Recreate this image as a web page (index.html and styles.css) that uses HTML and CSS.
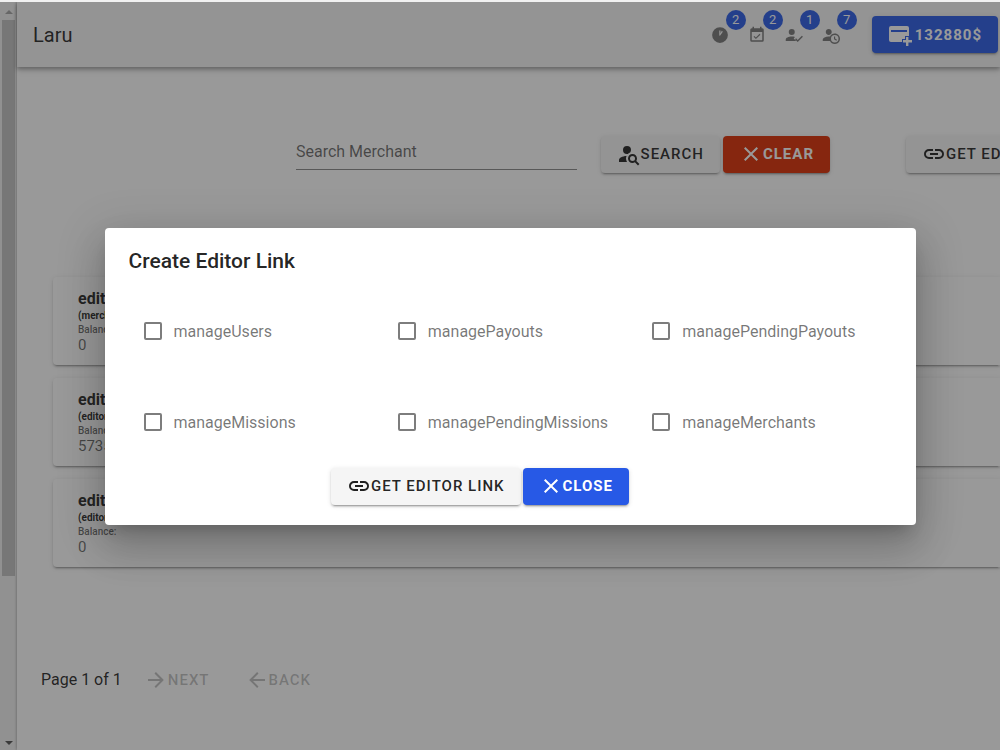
FILE: index.html
```html
<!DOCTYPE html>
<html lang="en">
<head>
    <meta charset="UTF-8">
    <meta name="viewport" content="width=device-width, initial-scale=1.0">
    <title>Laru</title>
    <link rel="stylesheet" href="styles.css">
</head>
<body>
    <!-- shared icons -->
    <svg class="icon-defs" aria-hidden="true">
        <symbol id="icon-link" viewBox="0 0 24 24"><path d="M3.9,12C3.9,10.29 5.29,8.9 7,8.9H11V7H7A5,5 0 0,0 2,12A5,5 0 0,0 7,17H11V15.1H7C5.29,15.1 3.9,13.71 3.9,12M8,13H16V11H8V13M17,7H13V8.9H17C18.71,8.9 20.1,10.29 20.1,12C20.1,13.71 18.71,15.1 17,15.1H13V17H17A5,5 0 0,0 22,12A5,5 0 0,0 17,7Z"/></symbol>
        <symbol id="icon-close" viewBox="0 0 24 24"><path d="M19,6.41L17.59,5L12,10.59L6.41,5L5,6.41L10.59,12L5,17.59L6.41,19L12,13.41L17.59,19L19,17.59L13.41,12L19,6.41Z"/></symbol>
    </svg>

    <div class="app">
        <div class="scrollbar">
            <span class="arrow arrow-up"></span>
            <div class="track"><div class="thumb"></div></div>
            <span class="arrow arrow-down"></span>
        </div>

        <div class="page">
            <header class="header">
                <div class="brand">Laru</div>
                <nav class="notices">
                    <a href="#" class="notice" aria-label="Pending missions">
                        <svg viewBox="0 0 24 24"><path fill-rule="evenodd" d="M12,1.5A10.5,10.5 0 0,1 22.5,12A10.5,10.5 0 0,1 12,22.5A10.5,10.5 0 0,1 1.5,12A10.5,10.5 0 0,1 12,1.5M11,6V12.5L12,13L15.8,7.6L14.4,6.4L12.6,9.6V6Z"/></svg>
                        <span class="badge">2</span>
                    </a>
                    <a href="#" class="notice" aria-label="Missions">
                        <svg viewBox="0 0 24 24"><path d="M19,3H18V1H16V3H8V1H6V3H5A2,2 0 0,0 3,5V19A2,2 0 0,0 5,21H19A2,2 0 0,0 21,19V5A2,2 0 0,0 19,3M19,19H5V8H19V19M10.56,17.46L16.5,11.53L15.43,10.47L10.56,15.34L8.45,13.23L7.39,14.29L10.56,17.46Z"/></svg>
                        <span class="badge">2</span>
                    </a>
                    <a href="#" class="notice" aria-label="Payouts">
                        <svg viewBox="0 0 24 24"><path d="M9,4A4,4 0 0,1 13,8A4,4 0 0,1 9,12A4,4 0 0,1 5,8A4,4 0 0,1 9,4M1,20V18C1,15.79 4.58,14 9,14C10.6,14 12.1,14.2 13.3,14.7L11.6,16.5L15,20H1M22.5,13L23.9,14.4L16.9,21.3L13.4,17.8L14.8,16.4L16.9,18.5L22.5,13Z"/></svg>
                        <span class="badge">1</span>
                    </a>
                    <a href="#" class="notice" aria-label="Pending payouts">
                        <svg viewBox="0 0 24 24"><path d="M10.63,14.1C12.23,10.58 16.38,9.03 19.9,10.63C23.42,12.23 24.97,16.38 23.37,19.9C22.24,22.4 19.75,24 17,24C14.3,24 11.83,22.44 10.67,20H1V18C1.06,16.86 1.84,15.93 3.34,15.18C4.84,14.43 6.72,14.04 9,14C9.57,14 10.11,14.05 10.63,14.1M9,4C10.12,4 11.06,4.37 11.81,5.1C12.56,5.85 12.94,6.79 12.94,7.91C12.94,9.03 12.56,9.96 11.81,10.71C11.06,11.47 10.12,11.84 9,11.84C7.88,11.84 6.94,11.47 6.19,10.71C5.44,9.96 5.06,9.03 5.06,7.91C5.06,6.79 5.44,5.85 6.19,5.1C6.94,4.37 7.88,4 9,4M17,22A5,5 0 0,0 22,17A5,5 0 0,0 17,12A5,5 0 0,0 12,17A5,5 0 0,0 17,22M16,14H17.5V16.82L19.94,18.23L19.19,19.53L16,17.69V14Z"/></svg>
                        <span class="badge">7</span>
                    </a>
                </nav>
                <button type="button" class="btn btn-primary btn-balance">
                    <svg viewBox="0 0 24 24"><path fill-rule="evenodd" d="M3,3H19A2,2 0 0,1 21,5V13H17V16H14V19H3A2,2 0 0,1 1,17V5A2,2 0 0,1 3,3M3,7V9H19V7H3M18,14H20.4V17H24V19.4H20.4V23H18V19.4H15V17H18V14Z"/></svg>
                    132880$
                </button>
            </header>

            <main class="content">
                <form class="search">
                    <input type="text" class="search-input" placeholder="Search Merchant" aria-label="Search Merchant">
                    <div class="btn-group">
                        <button type="button" class="btn">
                            <svg viewBox="0 0 24 24"><path d="M15.5,12C18,12 20,14 20,16.5C20,17.38 19.75,18.21 19.31,18.9L22.39,22L21,23.39L17.88,20.32C17.19,20.75 16.37,21 15.5,21C13,21 11,19 11,16.5C11,14 13,12 15.5,12M15.5,14A2.5,2.5 0 0,0 13,16.5A2.5,2.5 0 0,0 15.5,19A2.5,2.5 0 0,0 18,16.5A2.5,2.5 0 0,0 15.5,14M10,4A4,4 0 0,1 14,8C14,8.91 13.69,9.75 13.18,10.43C12.32,10.75 11.55,11.26 10.91,11.9L10,12A4,4 0 0,1 6,8A4,4 0 0,1 10,4M2,20V18C2,15.88 5.31,14.14 9.5,14C9.18,14.78 9,15.62 9,16.5C9,17.79 9.38,19 10,20H2Z"/></svg>
                            SEARCH
                        </button>
                        <button type="reset" class="btn btn-danger">
                            <svg><use href="#icon-close"/></svg>
                            CLEAR
                        </button>
                    </div>
                    <div class="search-extra">
                        <button type="button" class="btn">
                            <svg><use href="#icon-link"/></svg>
                            GET EDITOR LINK
                        </button>
                    </div>
                </form>

                <div class="cards">
                    <div class="card">
                        <div class="card-name">editor</div>
                        <div class="card-role">(merchant)</div>
                        <div class="card-label">Balance:</div>
                        <div class="card-value">0</div>
                    </div>
                    <div class="card">
                        <div class="card-name">editor</div>
                        <div class="card-role">(editor)</div>
                        <div class="card-label">Balance:</div>
                        <div class="card-value">5735</div>
                    </div>
                    <div class="card">
                        <div class="card-name">editor</div>
                        <div class="card-role">(editor)</div>
                        <div class="card-label">Balance:</div>
                        <div class="card-value">0</div>
                    </div>
                </div>

                <div class="pager">
                    <span>Page 1 of 1</span>
                    <div class="btn-group">
                        <button type="button" class="btn btn-text" disabled>
                            <svg viewBox="0 0 24 24"><path d="M4,11V13H16L10.5,18.5L11.92,19.92L19.84,12L11.92,4.08L10.5,5.5L16,11H4Z"/></svg>
                            NEXT
                        </button>
                        <button type="button" class="btn btn-text" disabled>
                            <svg viewBox="0 0 24 24"><path d="M20,11V13H8L13.5,18.5L12.08,19.92L4.16,12L12.08,4.08L13.5,5.5L8,11H20Z"/></svg>
                            BACK
                        </button>
                    </div>
                </div>
            </main>
        </div>

        <div class="overlay">
            <div class="dialog" role="dialog" aria-labelledby="dialog-title">
                <h2 class="dialog-title" id="dialog-title">Create Editor Link</h2>
                <div class="permissions">
                    <label class="permission"><input type="checkbox">manageUsers</label>
                    <label class="permission"><input type="checkbox">managePayouts</label>
                    <label class="permission"><input type="checkbox">managePendingPayouts</label>
                    <label class="permission"><input type="checkbox">manageMissions</label>
                    <label class="permission"><input type="checkbox">managePendingMissions</label>
                    <label class="permission"><input type="checkbox">manageMerchants</label>
                </div>
                <div class="dialog-actions">
                    <button type="button" class="btn">
                        <svg><use href="#icon-link"/></svg>
                        GET EDITOR LINK
                    </button>
                    <button type="button" class="btn btn-primary">
                        <svg><use href="#icon-close"/></svg>
                        CLOSE
                    </button>
                </div>
            </div>
        </div>
    </div>
</body>
</html>
```
FILE: styles.css
```css
* {
    box-sizing: border-box;
}
body {
    margin: 0;
    padding-top: 2px;
    height: 100vh;
    background-color: #f1f1f1;
    font-family: Roboto, sans-serif;
    font-size: 16px;
    color: rgba(0, 0, 0, 0.87);
    overflow: hidden;
}
.icon-defs {
    display: none;
}
.app {
    position: relative;
    display: flex;
    height: 100%;
    background-color: #fff;
    overflow: hidden;
}

/* scrollbar */
.scrollbar {
    display: flex;
    flex-direction: column;
    align-items: center;
    justify-content: space-between;
    width: 17px;
    padding: 8px 2px 5px;
    background-color: #f1f1f1;
}
.track {
    flex: 1;
    width: 100%;
    padding: 6px 0 8px;
}
.thumb {
    height: 78%;
    background-color: #c1c1c1;
}
.arrow {
    border-left: 4px solid transparent;
    border-right: 4px solid transparent;
}
.arrow-up {
    border-bottom: 4px solid #a3a3a3;
}
.arrow-down {
    border-top: 4px solid #505050;
}

/* header */
.page {
    flex: 1;
    min-width: 0;
    box-shadow: 0 0 3px rgba(0, 0, 0, 0.4);
}
.header {
    display: flex;
    align-items: center;
    height: 65px;
    padding: 0 2px 0 16px;
    background-color: #f5f5f5;
    box-shadow: 0 2px 4px rgba(0, 0, 0, 0.3), 0 4px 6px rgba(0, 0, 0, 0.12);
}
.brand {
    flex: 1;
    font-size: 20px;
}
.notices {
    display: flex;
    gap: 19px;
    margin-right: 32px;
}
.notice {
    position: relative;
    width: 18px;
    height: 18px;
    color: #757575;
    text-decoration: none;
}
.notice svg {
    width: 18px;
    height: 18px;
    fill: currentColor;
}
.badge {
    position: absolute;
    left: 15px;
    top: -16px;
    width: 20px;
    height: 20px;
    border-radius: 50%;
    background-color: #2759e6;
    color: #fff;
    font-size: 13px;
    line-height: 20px;
    text-align: center;
}

/* buttons */
.btn {
    display: inline-flex;
    align-items: center;
    flex-shrink: 0;
    height: 37px;
    padding: 0 16px;
    border: none;
    border-radius: 4px;
    background-color: #f5f5f5;
    color: rgba(0, 0, 0, 0.87);
    font-family: inherit;
    font-size: 15px;
    font-weight: 500;
    letter-spacing: 1px;
    white-space: nowrap;
    box-shadow: 0 3px 1px -2px rgba(0, 0, 0, 0.2), 0 2px 2px rgba(0, 0, 0, 0.14), 0 1px 5px rgba(0, 0, 0, 0.12);
    cursor: pointer;
}
.btn svg {
    width: 24px;
    height: 24px;
    fill: currentColor;
}
.btn-primary {
    background-color: #2759e6;
    color: #fff;
    font-weight: 700;
}
.btn-danger {
    background-color: #dd2c00;
    color: #fff;
    font-weight: 700;
}
.btn-balance {
    gap: 3px;
}
.btn-text {
    background-color: transparent;
    color: rgba(0, 0, 0, 0.26);
    box-shadow: none;
}
.btn-group {
    display: flex;
    gap: 3px;
}

/* page content */
.content {
    padding: 67px 0 0 36px;
}
.search {
    display: flex;
    align-items: center;
    padding-left: 243px;
}
.search-input {
    flex: 1;
    min-width: 0;
    height: 36px;
    margin: 0 24px 4px 0;
    padding: 0;
    border: none;
    border-bottom: 1px solid #888;
    background-color: transparent;
    font-family: inherit;
    font-size: 16px;
    outline: none;
}
.search-input::placeholder {
    color: rgba(0, 0, 0, 0.6);
}
.search-extra {
    display: flex;
    width: 94px;
    margin-left: 76px;
}
.cards {
    display: flex;
    flex-direction: column;
    gap: 13px;
    margin-top: 103px;
}
.card {
    height: 88px;
    padding: 12px 25px;
    border-radius: 4px 0 0 4px;
    background-color: #fff;
    box-shadow: 0 3px 1px -2px rgba(0, 0, 0, 0.2), 0 2px 2px rgba(0, 0, 0, 0.14), 0 1px 5px rgba(0, 0, 0, 0.12);
}
.card-name {
    font-weight: 700;
    line-height: 20px;
}
.card-role {
    font-size: 10px;
    font-weight: 700;
    line-height: 14px;
}
.card-label {
    color: rgba(0, 0, 0, 0.6);
    font-size: 10px;
    font-weight: 500;
    line-height: 14px;
}
.card-value {
    color: rgba(0, 0, 0, 0.6);
    font-size: 15px;
    line-height: 16px;
}
.pager {
    display: flex;
    align-items: center;
    gap: 6px;
    margin: 94px 0 0 -12px;
}

/* dialog */
.overlay {
    position: absolute;
    inset: 0;
    display: flex;
    align-items: center;
    justify-content: center;
    padding: 0 0 0 20px;
    background-color: rgba(33, 33, 33, 0.46);
}
.dialog {
    width: 90%;
    max-width: 811px;
    padding: 16px 24px 20px;
    border-radius: 4px;
    background-color: #fff;
    box-shadow: 0 11px 15px -7px rgba(0, 0, 0, 0.2), 0 24px 38px 3px rgba(0, 0, 0, 0.14), 0 9px 46px 8px rgba(0, 0, 0, 0.12);
}
.dialog-title {
    margin: 0 0 8px;
    font-size: 21px;
    font-weight: 500;
    line-height: 34px;
}
.permissions {
    display: grid;
    grid-template-columns: repeat(3, 1fr);
    grid-auto-rows: 91px;
}
.permission {
    display: flex;
    align-items: center;
    gap: 12px;
    padding-left: 15px;
    color: rgba(0, 0, 0, 0.54);
}
.permission input {
    appearance: none;
    width: 18px;
    height: 18px;
    margin: 0;
    border: 2px solid #7d7d7d;
    border-radius: 2px;
}
.permission input:checked {
    background-color: #2759e6;
}
.dialog-actions {
    display: flex;
    justify-content: center;
    gap: 2px;
    padding-right: 60px;
}
```
